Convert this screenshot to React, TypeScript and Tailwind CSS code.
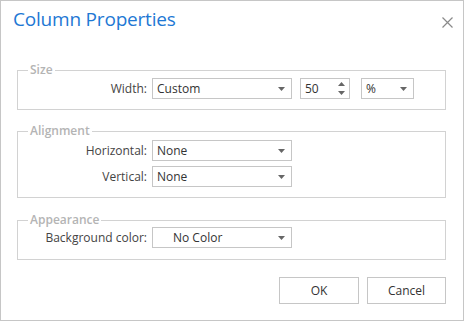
import React from 'react';

const Caret = () => (
    <svg width="7" height="4" viewBox="0 0 7 4" className="shrink-0">
        <path d="M0 0h7L3.5 4z" fill="#666" />
    </svg>
);

const Select = ({ value, w = 'w-[140px]', indent = false }: { value: string; w?: string; indent?: boolean }) => (
    <div className={`${w} h-[21px] border border-[#c6c6c6] bg-white flex items-center justify-between pr-[6px] ${indent ? 'pl-[20px]' : 'pl-[4px]'}`}>
        <span className="text-[#333]">{value}</span>
        <Caret />
    </div>
);

const Row = ({ label, children, className = '' }: { label: string; children: React.ReactNode; className?: string }) => (
    <div className={`flex items-center ${className}`}>
        <div className="w-[134px] pr-[5px] text-right text-[#444]">{label}</div>
        {children}
    </div>
);

const Group = ({ title, children, className = '' }: { title: string; children: React.ReactNode; className?: string }) => (
    <fieldset className={`border border-[#d2d2d2] ml-[16px] mr-[17px] ${className}`}>
        <legend className="ml-[10px] px-[2px] h-[16px] leading-[16px] font-semibold text-[#b4b4b4]">{title}</legend>
        {children}
    </fieldset>
);

export default function App() {
    return (
        <div
            className="w-[464px] h-[321px] border border-[#c6c6c6] bg-white text-[12px] flex flex-col"
            style={{ fontFamily: '"Open Sans", "Noto Sans", sans-serif' }}
        >
            {/* Header */}
            <div className="flex items-start justify-between pl-[12px] pr-[10px] pt-[5px] h-[61px]">
                <h1 className="text-[19px] leading-[26px] text-[#1e78d4] tracking-[-0.2px]">Column Properties</h1>
                <button className="mt-[11px]">
                    <svg width="11" height="11" viewBox="0 0 11 11">
                        <path d="M0.5 0.5L10.5 10.5M10.5 0.5L0.5 10.5" stroke="#8a8a8a" strokeWidth="1.2" />
                    </svg>
                </button>
            </div>

            {/* Size */}
            <Group title="Size" className="pb-[10px]">
                <Row label="Width:">
                    <Select value="Custom" />
                    <div className="ml-[8px] w-[50px] h-[21px] border border-[#c6c6c6] flex items-center justify-between pl-[4px] pr-[4px]">
                        <span className="text-[#333]">50</span>
                        <div className="flex flex-col gap-[5px]">
                            <svg width="7" height="4" viewBox="0 0 7 4"><path d="M3.5 0L7 4H0z" fill="#666" /></svg>
                            <svg width="7" height="4" viewBox="0 0 7 4"><path d="M0 0h7L3.5 4z" fill="#666" /></svg>
                        </div>
                    </div>
                    <div className="ml-[11px]">
                        <Select value="%" w="w-[53px]" />
                    </div>
                </Row>
            </Group>

            {/* Alignment */}
            <Group title="Alignment" className="mt-[13px] pb-[10px]">
                <div className="flex flex-col gap-[5px] pt-[1px]">
                    <Row label="Horizontal:">
                        <Select value="None" />
                    </Row>
                    <Row label="Vertical:">
                        <Select value="None" />
                    </Row>
                </div>
            </Group>

            {/* Appearance */}
            <Group title="Appearance" className="mt-[14px] pb-[11px]">
                <Row label="Background color:" className="-mt-[1px]">
                    <Select value="No Color" indent />
                </Row>
            </Group>

            {/* Footer */}
            <div className="flex justify-end gap-[8px] mr-[17px] mt-[17px]">
                <button className="w-[80px] h-[27px] border border-[#c6c6c6] bg-white text-[#333]">OK</button>
                <button className="w-[79px] h-[27px] border border-[#c6c6c6] bg-white text-[#333]">Cancel</button>
            </div>
        </div>
    );
}
